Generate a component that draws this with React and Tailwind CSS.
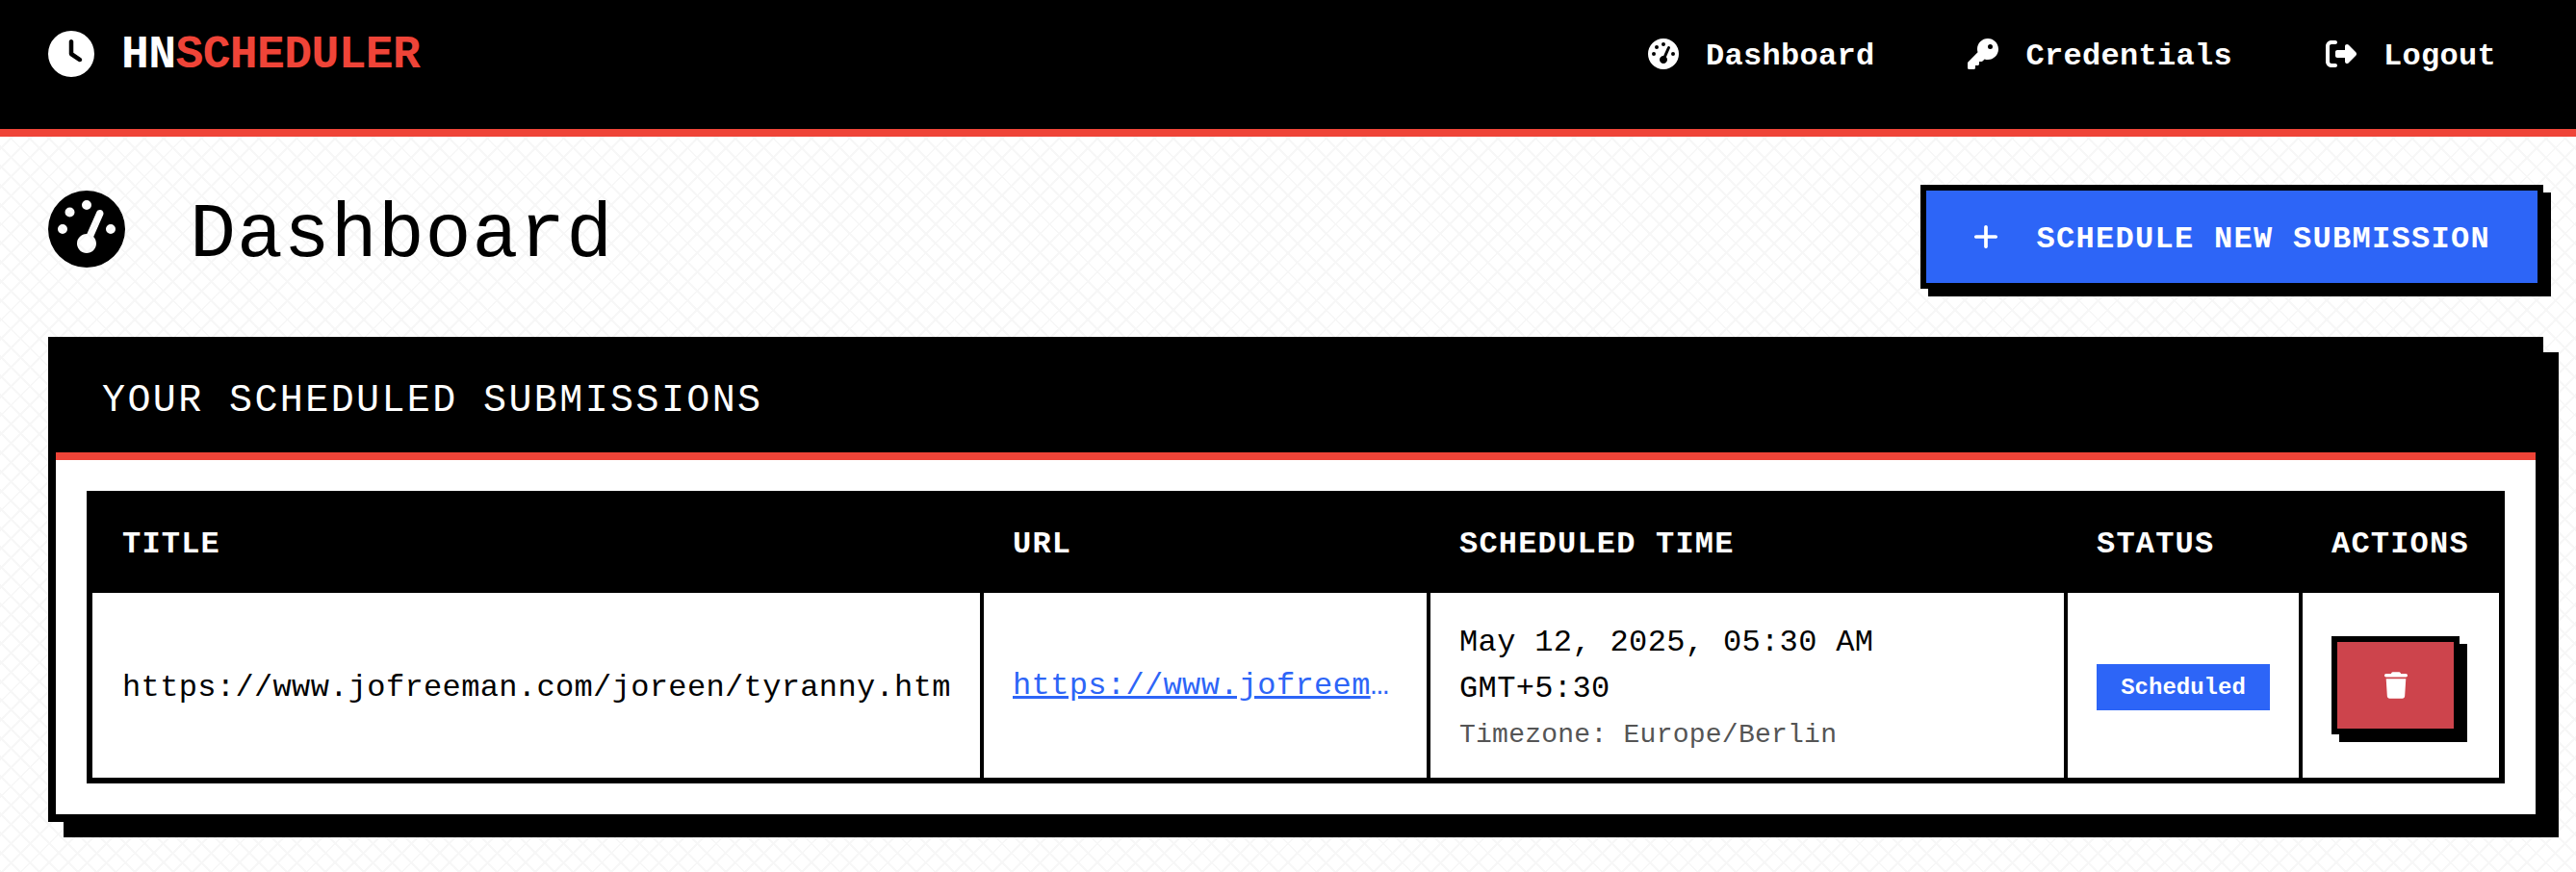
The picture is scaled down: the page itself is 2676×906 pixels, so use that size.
import React from 'react';
import { FaClock, FaGaugeHigh, FaKey, FaPlus, FaRightFromBracket, FaTrash } from 'react-icons/fa6';

const NavLink = ({ icon: Icon, label }) => (
  <a href="#" className="flex items-center gap-[28px] text-[32px] leading-[48px] font-bold tracking-[0.3px] text-white">
    <Icon className="w-8 h-8" />
    <span className="pt-[6px]">{label}</span>
  </a>
);

const App = () => {
  return (
    <div className="min-h-[906px] bg-white font-['Liberation_Mono','DejaVu_Sans_Mono',monospace] text-black bg-[repeating-linear-gradient(45deg,#f7f7f7_0_2px,transparent_2px_14px),repeating-linear-gradient(-45deg,#f7f7f7_0_2px,transparent_2px_14px)]">
      {/* Navbar */}
      <header className="flex items-center justify-between h-[142px] bg-black border-b-8 border-[#ef4438] pl-[50px] pr-[83px] pb-[22px]">
        <a href="#" className="flex items-center gap-[28px] text-white">
          <FaClock className="w-12 h-12" />
          <span className="pt-[2px] text-[48px] leading-[48px] font-bold tracking-[-0.6px]">
            HN<span className="text-[#ef4438]">SCHEDULER</span>
          </span>
        </a>
        <nav className="flex items-center gap-[97px]">
          <NavLink icon={FaGaugeHigh} label="Dashboard" />
          <NavLink icon={FaKey} label="Credentials" />
          <NavLink icon={FaRightFromBracket} label="Logout" />
        </nav>
      </header>

      <main className="pl-[50px] pr-[34px] pt-[50px]">
        {/* Page title */}
        <div className="flex items-start justify-between mb-[50px]">
          <div className="flex items-start gap-[67px] mt-[6px]">
            <FaGaugeHigh className="w-20 h-20" />
            <h1 className="mt-[7px] text-[80px] leading-[80px] font-normal tracking-[0.9px]">Dashboard</h1>
          </div>
          <button className="flex items-center gap-[39px] h-[108px] px-[49px] border-[6px] border-black bg-[#2d65f7] text-white text-[32px] font-bold tracking-[1.3px] shadow-[8px_8px_0_#000]">
            <FaPlus className="w-[26px] h-[30px]" />
            <span className="pt-[6px]">SCHEDULE NEW SUBMISSION</span>
          </button>
        </div>

        {/* Submissions card */}
        <section className="border-8 border-black bg-white shadow-[16px_16px_0_#000]">
          <div className="flex items-center h-[120px] bg-black border-b-8 border-[#ef4438] px-12 text-white">
            <h2 className="pt-[6px] text-[40px] leading-[60px] font-normal tracking-[2.4px]">YOUR SCHEDULED SUBMISSIONS</h2>
          </div>
          <div className="p-8">
            <div className="border-[6px] border-black">
              <table className="w-full table-fixed border-separate border-spacing-0">
                <colgroup>
                  <col className="w-[926px]" />
                  <col className="w-[464px]" />
                  <col className="w-[662px]" />
                  <col className="w-[244px]" />
                  <col className="w-[204px]" />
                </colgroup>
                <thead>
                  <tr className="h-[100px] bg-black text-white text-left text-[32px] font-bold tracking-[1.2px]">
                    <th className="pl-[31px] font-bold">TITLE</th>
                    <th className="pl-[30px] font-bold">URL</th>
                    <th className="pl-[30px] font-bold">SCHEDULED TIME</th>
                    <th className="pl-[30px] font-bold">STATUS</th>
                    <th className="pl-[30px] font-bold">ACTIONS</th>
                  </tr>
                </thead>
                <tbody>
                  <tr className="h-[192px] text-[32px] tracking-[0.36px]">
                    <td className="pl-[31px] pt-[6px] border-r-4 border-black whitespace-nowrap">https://www.jofreeman.com/joreen/tyranny.htm</td>
                    <td className="pl-[30px] pt-[2px] border-r-4 border-black">
                      <a href="#" className="block w-[400px] truncate text-[#2d65f7] underline">https://www.jofreeman.com/joreen/tyranny.htm</a>
                    </td>
                    <td className="pl-[30px] pt-[8px] border-r-4 border-black">
                      <div className="leading-[48px]">May 12, 2025, 05:30 AM</div>
                      <div className="leading-[48px]">GMT+5:30</div>
                      <div className="text-[28px] leading-[48px] tracking-[0.25px] text-[#555]">Timezone: Europe/Berlin</div>
                    </td>
                    <td className="pl-[30px] pt-[4px] border-r-4 border-black">
                      <span className="flex items-center justify-center w-[180px] h-12 pt-[2px] bg-[#2d65f7] text-white text-[24px] font-bold tracking-normal">Scheduled</span>
                    </td>
                    <td className="pl-[30px]">
                      <button className="flex items-center justify-center w-[133px] h-[102px] border-[6px] border-black bg-[#cd444c] text-white shadow-[8px_8px_0_#000]">
                        <FaTrash className="w-6 h-7" />
                      </button>
                    </td>
                  </tr>
                </tbody>
              </table>
            </div>
          </div>
        </section>
      </main>
    </div>
  );
};

export default App;
